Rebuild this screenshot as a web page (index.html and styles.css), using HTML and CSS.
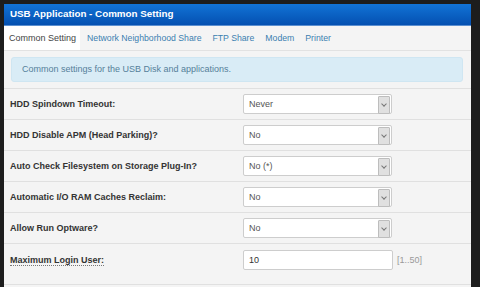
FILE: index.html
```html
<!DOCTYPE html>
<html lang="en">
<head>
  <meta charset="UTF-8">
  <title>USB Application - Common Setting</title>
  <link rel="stylesheet" href="styles.css">
</head>
<body>
  <div class="panel">
    <div class="panel-head">USB Application - Common Setting</div>

    <div class="tabs">
      <span class="tab active">Common Setting</span>
      <span class="tab">Network Neighborhood Share</span>
      <span class="tab">FTP Share</span>
      <span class="tab">Modem</span>
      <span class="tab">Printer</span>
    </div>

    <div class="alert">Common settings for the USB Disk and applications.</div>

    <div class="rows">
      <div class="row">
        <div class="label">HDD Spindown Timeout:</div>
        <div class="select"><span>Never</span><i class="arrow"></i></div>
      </div>
      <div class="row">
        <div class="label">HDD Disable APM (Head Parking)?</div>
        <div class="select"><span>No</span><i class="arrow"></i></div>
      </div>
      <div class="row">
        <div class="label">Auto Check Filesystem on Storage Plug-In?</div>
        <div class="select"><span>No (*)</span><i class="arrow"></i></div>
      </div>
      <div class="row">
        <div class="label">Automatic I/O RAM Caches Reclaim:</div>
        <div class="select"><span>No</span><i class="arrow"></i></div>
      </div>
      <div class="row">
        <div class="label">Allow Run Optware?</div>
        <div class="select"><span>No</span><i class="arrow"></i></div>
      </div>
      <div class="row tall">
        <div class="label"><span class="hint">Maximum Login User:</span></div>
        <div class="text-input">10</div>
        <span class="range">[1..50]</span>
      </div>
      <div class="row end"></div>
    </div>
  </div>
</body>
</html>
```

FILE: styles.css
```css
body {
  margin: 0;
  padding: 4px 9px 0 4px;
  background: #1d1d1d;
  font-family: "Liberation Sans", Arial, sans-serif;
  font-size: 9px;
  color: #333;
  height: 283px;
  overflow: hidden;
}
.panel {
  background: #f4f4f4;
  height: 100%;
}
.panel-head {
  height: 21px;
  line-height: 20px;
  padding-left: 6px;
  color: #fff;
  font-weight: bold;
  font-size: 9.8px;
  background: linear-gradient(#1273d6, #0450b1);
  border-bottom: 1px solid #5b8fd0;
}
.tabs {
  display: flex;
  height: 24px;
  border-bottom: 1px solid #e2e2e2;
}
.tab {
  padding: 0 5px;
  line-height: 25px;
  font-size: 8.7px;
  color: #3b7fb0;
  margin-right: 1px;
}
.tab.active {
  background: #fff;
  color: #444;
  font-size: 9px;
  padding: 0 4px 0 5px;
  margin-right: 2px;
}
.alert {
  margin: 6px 8px 0 7px;
  height: 23px;
  line-height: 23px;
  padding-left: 10px;
  background: #d9ecf6;
  border: 1px solid #cfe6f2;
  border-radius: 3px;
  color: #55809a;
}
.rows {
  margin-top: 6px;
}
.row {
  display: flex;
  align-items: center;
  height: 30px;
  border-top: 1px solid #e0e0e0;
  padding-left: 6px;
}
.row.tall {
  height: 41px;
  align-items: flex-start;
  padding-top: 6px;
  box-sizing: border-box;
}
.row.end {
  height: 0;
}
.label {
  width: 233px;
  font-weight: bold;
  color: #333;
}
.row.tall .label {
  padding-top: 5px;
}
.hint {
  border-bottom: 1px dotted #777;
}
.select {
  position: relative;
  box-sizing: border-box;
  width: 149px;
  height: 20px;
  line-height: 18px;
  padding-left: 5px;
  background: #fff;
  border: 1px solid #cdcdcd;
  border-radius: 2px;
  color: #555;
}
.arrow {
  position: absolute;
  right: 1px;
  top: 1px;
  width: 10px;
  height: 16px;
  background: #e0e0e0;
  border: 1px solid #bdbdbd;
  border-radius: 1px;
}
.arrow::after {
  content: "";
  position: absolute;
  left: 3px;
  top: 5px;
  width: 3px;
  height: 3px;
  border-right: 1px solid #777;
  border-bottom: 1px solid #777;
  transform: rotate(45deg);
}
.text-input {
  box-sizing: border-box;
  width: 150px;
  height: 20px;
  line-height: 18px;
  padding-left: 5px;
  background: #fff;
  border: 1px solid #cdcdcd;
  border-radius: 2px;
  color: #333;
}
.range {
  margin-left: 4px;
  line-height: 20px;
  color: #9a9a9a;
}
```
